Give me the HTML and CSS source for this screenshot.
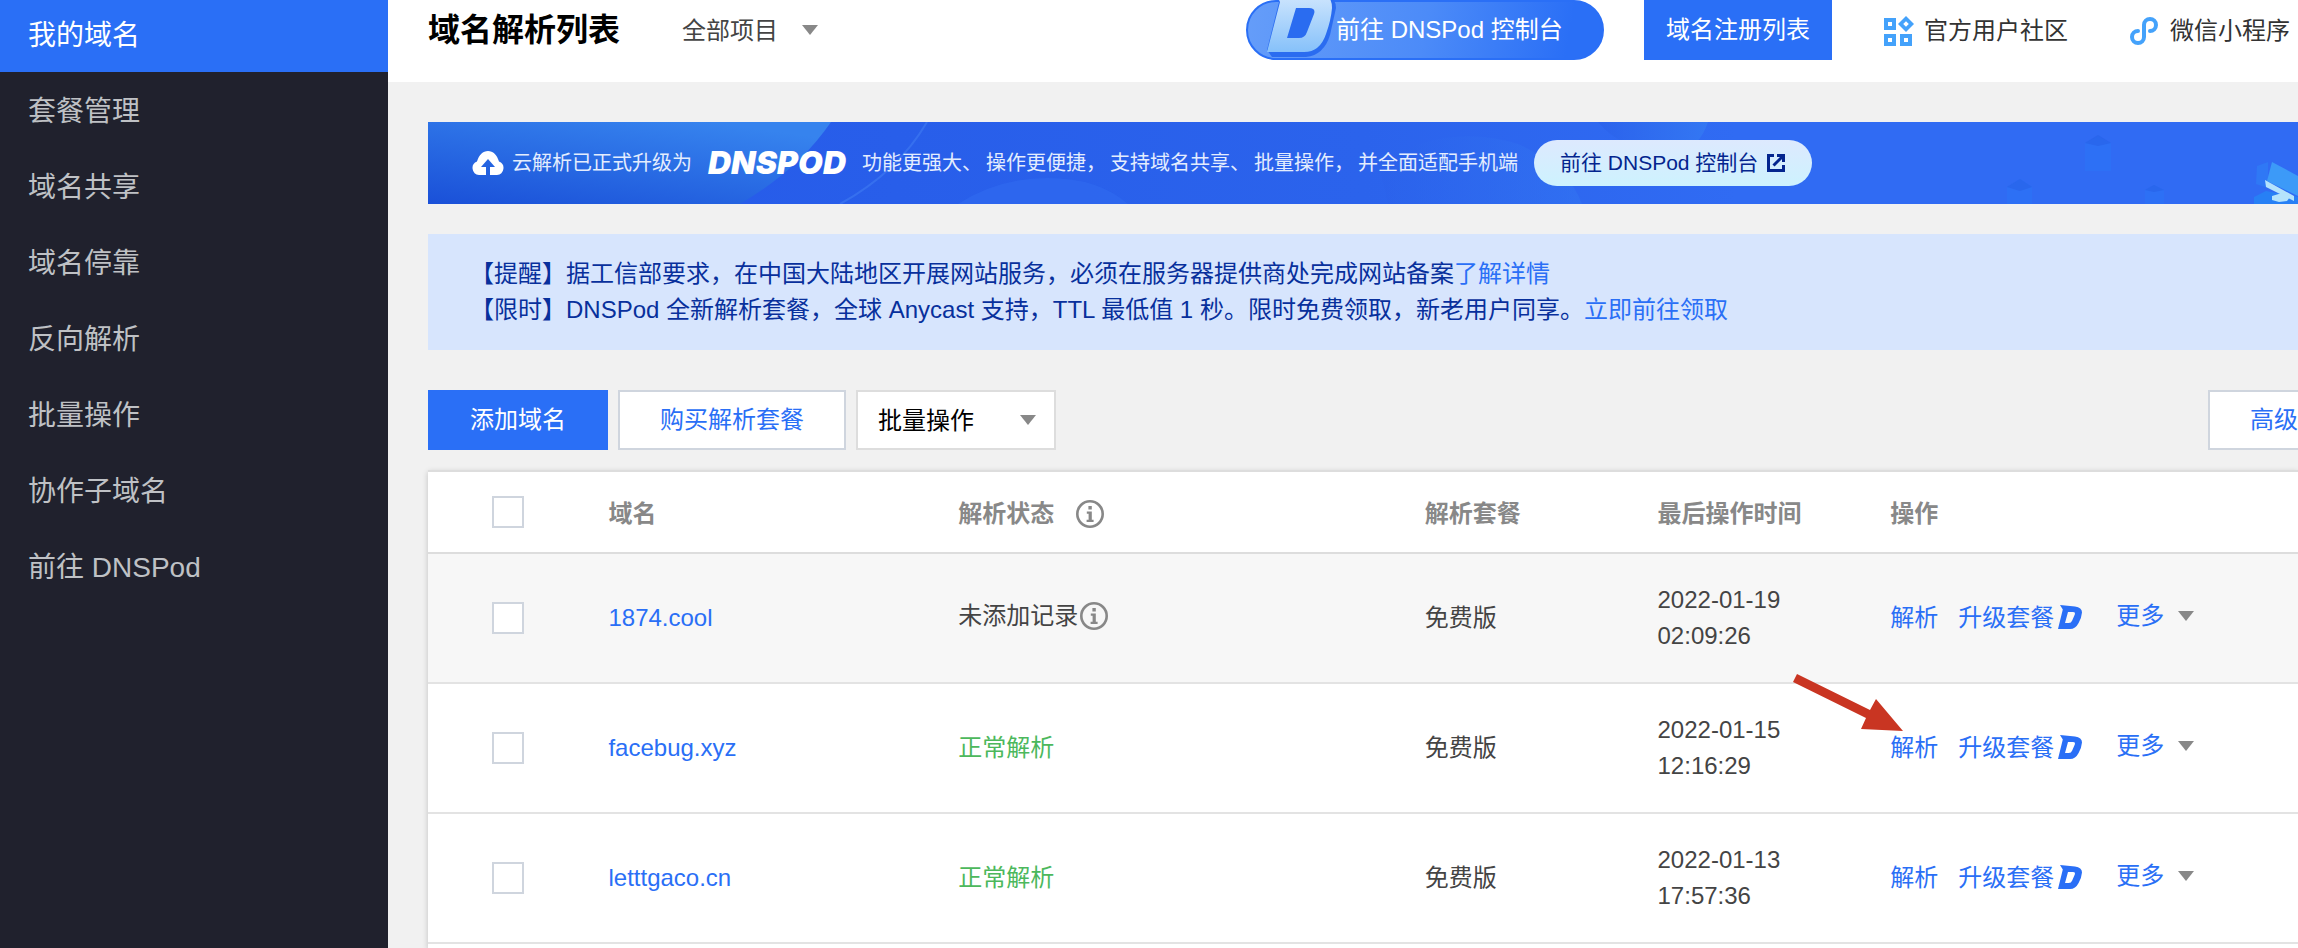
FILE: index.html
```
<!DOCTYPE html>
<html lang="zh-CN">
<head>
<meta charset="utf-8">
<title>域名解析列表</title>
<link rel="stylesheet" href="styles.css">
</head>
<body>
<svg class="defs" aria-hidden="true">
  <symbol id="caret" viewBox="0 0 16 10"><path d="M0 0h16L8 10z" fill="#888"/></symbol>
  <symbol id="info" viewBox="0 0 28 28">
    <circle cx="14" cy="14" r="12.7" fill="none" stroke="#888" stroke-width="2.6"/>
    <path d="M12.400 6h3.400v3.400h-3.400zM10.800 11.600h5v8.200h1.800v2.200h-7v-2.200h2v-6h-1.800z" fill="#888"/>
  </symbol>
  <symbol id="dmark" viewBox="0 0 24 24">
    <path fill="#2a6ff6" fill-rule="evenodd" d="M2 0l15 1.500q7 1 7 6-.6 6-3.400 10.500Q17.500 24 12 24H0L4.800 4.500zM10 7L7 18h3.800q2.400 0 3.400-2.600l2.600-6q.7-2.400-1.800-2.400z"/>
  </symbol>
</svg>
<div class="layout">
  <nav class="sidebar">
    <a class="nav-item active" href="#">我的域名</a>
    <a class="nav-item" href="#">套餐管理</a>
    <a class="nav-item" href="#">域名共享</a>
    <a class="nav-item" href="#">域名停靠</a>
    <a class="nav-item" href="#">反向解析</a>
    <a class="nav-item" href="#">批量操作</a>
    <a class="nav-item" href="#">协作子域名</a>
    <a class="nav-item" href="#">前往 DNSPod</a>
  </nav>
  <main class="main">
    <header class="header">
      <h1 class="title">域名解析列表</h1>
      <div class="picker project">
        <select class="picker-field" aria-label="项目"><option>全部项目</option></select>
        <svg class="picker-caret"><use href="#caret"/></svg>
      </div>
      <div class="header-right">
        <button class="console" type="button">
          <svg class="console-mark" viewBox="0 0 76 60" aria-hidden="true">
            <defs><linearGradient id="ice" x1="0" y1="0" x2="0" y2="1"><stop offset="0" stop-color="#cfe6fd"/><stop offset="1" stop-color="#86c1fa"/></linearGradient></defs>
            <path fill="#2a6cf0" d="M7 50l5 7h34q18-2 24-22l6-27q0-6-4-10H20z"/>
            <path fill="url(#ice)" fill-rule="evenodd" d="M16-6h44q12 0 12 14-1 12-6 26-6 18-22 18H7L20 2zM36 8L27 38h12q6 0 8-6l7-18q2-6-5-6z"/>
          </svg>
          <span>前往 DNSPod 控制台</span>
        </button>
        <button class="register" type="button">域名注册列表</button>
        <a class="link" href="#">
          <svg class="link-icon" viewBox="0 0 30 30" aria-hidden="true"><path fill="#44a2fb" fill-rule="evenodd" d="M0 2h12v12H0zm4 4v4h4V6zM0 18h12v12H0zm4 4v4h4v-4zM16 18h12v12H16zm4 4v4h4v-4zM22 0l8 8-8 8-8-8zm0 5.200L19.200 8l2.800 2.800L24.800 8z"/></svg>
          <span>官方用户社区</span>
        </a>
        <a class="link mini" href="#">
          <svg class="link-icon" viewBox="0 0 28 28" aria-hidden="true"><path fill="none" stroke="#44a2fb" stroke-width="4" stroke-linecap="round" d="M8 14a6 6 0 1 0 6 6V8a6 6 0 1 1 6 6"/></svg>
          <span>微信小程序</span>
        </a>
      </div>
    </header>

    <section class="banner">
      <svg class="banner-art" viewBox="0 0 1870 82" preserveAspectRatio="xMinYMin slice" aria-hidden="true">
        <defs>
          <linearGradient id="sky" x1="0" y1="1" x2=".7" y2="0"><stop offset="0" stop-color="#1a50d8"/><stop offset="1" stop-color="#3683ee"/></linearGradient>
          <linearGradient id="arc" x1="0" y1="0" x2="1" y2="0"><stop offset="0" stop-color="#2a60ea"/><stop offset="1" stop-color="#357cf3"/></linearGradient>
        </defs>
        <path fill="url(#sky)" d="M0 0h403Q370 48 312 82H0z"/>
        <path fill="none" stroke="#3f7cf2" stroke-width="2" opacity=".6" d="M499 0Q470 50 412 82"/>
        <path fill="#2f69ef" opacity=".7" d="M530 82q40-26 90-26t80 26z"/>
        <path fill="url(#arc)" opacity=".35" d="M950 40q70-40 140-18 50 22 64 60H960z"/>
        <path fill="url(#arc)" opacity=".7" d="M1170 0h110q-8 24-30 34-56-4-80-34z"/>
        <g fill="#2d70f5"><path d="M1657 21l13-7 13 7v28h-26zM1579 65l13-8 12 8v17h-25zM1717 68l9-5 10 5v14h-19z"/></g>
        <g fill="#255ee6" opacity=".5"><path d="M1657 21l13-8 13 8-13 3zM1579 65l13-8 12 8-12 4zM1717 68l9-5 10 5-10 2z"/></g>
        <path fill="#2780f5" d="M1826 75l12-6 32 6v7h-44z"/>
        <path fill="#2f78f5" d="M1829 44l11-4v26l-12-4z"/>
        <path fill="#3c9af8" d="M1844 40l26 14v20l-31-15z"/>
        <path fill="#b4e3fc" d="M1837 58l29 16v5l-28-14zM1844 74l10-3 8 4-3 4-8 1-7-2z"/>
      </svg>
      <div class="banner-body">
        <svg class="cloud" viewBox="0 0 32 24" aria-hidden="true"><path fill="#fff" d="M7 24a7 7 0 0 1-2-13.500C7 4 11 0 16 0s9 4 11 10.500A7 7 0 0 1 25 24h-7v-8h5l-7-8-7 8h5v8z"/></svg>
        <span>云解析已正式升级为</span>
        <strong class="wordmark">DNSPOD</strong>
        <span class="phrases"><span>功能更强大、</span><span>操作更便捷，</span><span>支持域名共享、</span><span>批量操作，</span><span>并全面适配手机端</span></span>
        <a class="pill" href="#">前往 DNSPod 控制台
          <svg class="pill-icon" viewBox="0 0 20 20" aria-hidden="true"><path fill="none" stroke="#04258e" stroke-width="3" d="M8 2.500H2.500v15h15V12M11 2.500h6.500V9M17 3l-9.500 9.500"/></svg>
        </a>
      </div>
    </section>

    <section class="notice">
      <p>【提醒】据工信部要求，在中国大陆地区开展网站服务，必须在服务器提供商处完成网站备案<a href="#">了解详情</a></p>
      <p>【限时】DNSPod 全新解析套餐，全球 Anycast 支持，TTL 最低值 1 秒。限时免费领取，新老用户同享。<a href="#">立即前往领取</a></p>
    </section>

    <div class="toolbar">
      <button class="btn primary" type="button">添加域名</button>
      <button class="btn" type="button">购买解析套餐</button>
      <div class="picker batch">
        <select class="picker-field" aria-label="批量操作"><option>批量操作</option></select>
        <svg class="picker-caret"><use href="#caret"/></svg>
      </div>
      <button class="btn advanced" type="button">高级</button>
    </div>

    <div class="card">
      <table class="domains">
        <colgroup><col class="c-check"><col class="c-name"><col class="c-status"><col class="c-plan"><col class="c-time"><col></colgroup>
        <thead>
          <tr>
            <th class="check"><input type="checkbox" aria-label="全选"></th>
            <th>域名</th>
            <th><span class="with-info spaced">解析状态<svg class="info"><use href="#info"/></svg></span></th>
            <th>解析套餐</th>
            <th>最后操作时间</th>
            <th>操作</th>
          </tr>
        </thead>
        <tbody>
          <tr class="hover">
            <td class="check"><input type="checkbox" aria-label="选择 1874.cool"></td>
            <td><a href="#">1874.cool</a></td>
            <td><span class="with-info raised">未添加记录<svg class="info"><use href="#info"/></svg></span></td>
            <td>免费版</td>
            <td>2022-01-19<br>02:09:26</td>
            <td><div class="actions"><a href="#">解析</a><a class="upgrade" href="#">升级套餐<svg class="dmark"><use href="#dmark"/></svg></a><button class="more" type="button">更多<svg class="caret"><use href="#caret"/></svg></button></div></td>
          </tr>
          <tr>
            <td class="check"><input type="checkbox" aria-label="选择 facebug.xyz"></td>
            <td><a href="#">facebug.xyz</a></td>
            <td class="ok">正常解析</td>
            <td>免费版</td>
            <td>2022-01-15<br>12:16:29</td>
            <td class="pointed"><div class="actions"><a href="#">解析</a><a class="upgrade" href="#">升级套餐<svg class="dmark"><use href="#dmark"/></svg></a><button class="more" type="button">更多<svg class="caret"><use href="#caret"/></svg></button></div>
              <svg class="arrow" viewBox="0 0 110 58" aria-hidden="true"><path fill="#c93522" d="M4 0L77 36l6-11 27 32-42-2 5-11L0 8z"/></svg></td>
          </tr>
          <tr>
            <td class="check"><input type="checkbox" aria-label="选择 letttgaco.cn"></td>
            <td><a href="#">letttgaco.cn</a></td>
            <td class="ok">正常解析</td>
            <td>免费版</td>
            <td>2022-01-13<br>17:57:36</td>
            <td><div class="actions"><a href="#">解析</a><a class="upgrade" href="#">升级套餐<svg class="dmark"><use href="#dmark"/></svg></a><button class="more" type="button">更多<svg class="caret"><use href="#caret"/></svg></button></div></td>
          </tr>
        </tbody>
      </table>
    </div>
  </main>
</div>
</body>
</html>
```
FILE: styles.css
```
* { box-sizing: border-box; }
body {
  margin: 0;
  font-family: "Liberation Sans", "Noto Sans CJK SC", sans-serif;
  font-size: 24px;
  line-height: 36px;
  color: #444;
  background: #f1f1f1;
}
a { color: #2a6ff6; text-decoration: none; }
button, select { font: inherit; margin: 0; cursor: pointer; }
svg { flex: none; }
.defs { position: absolute; width: 0; height: 0; }

.layout { display: flex; min-height: 100vh; }
.sidebar { flex: none; width: 388px; background: #20212d; }
.nav-item {
  display: block;
  padding: 4px 28px 0;
  font-size: 28px;
  line-height: 72px;
  color: #bfc1c5;
}
.nav-item.active { padding-top: 0; background: #2a6ff6; color: #fff; }

.main { flex: 1; min-width: 0; display: flex; flex-direction: column; }
.header {
  display: flex;
  align-items: center;
  padding: 0 8px 22px 40px;
  background: #fff;
  white-space: nowrap;
}
.title { margin: 0; font-size: 32px; line-height: 60px; color: #000; }

.picker { position: relative; }
.picker-field {
  display: block;
  width: 100%;
  appearance: none;
  border: 0;
  background: transparent;
  color: inherit;
}
.picker-caret { position: absolute; top: 50%; width: 16px; height: 10px; margin-top: -5px; pointer-events: none; }
.project { margin-left: 62px; width: 138px; }
.project .picker-field { padding: 2px 0 0; }
.project .picker-caret { right: 2px; }

.header-right { display: flex; align-items: center; margin-left: auto; }
.console {
  display: flex;
  align-items: center;
  width: 358px;
  height: 60px;
  padding: 0 0 0 12px;
  border: 2px solid #2a6ff6;
  border-radius: 30px;
  background: linear-gradient(100deg, #659df9, #4c8bf8 50%, #2a6ff6 90%);
  color: #fff;
}
.console-mark { width: 76px; height: 60px; }
.register { height: 60px; margin-left: 40px; padding: 0 22px; border: 0; background: #2a6ff6; color: #fff; }
.link { display: flex; align-items: center; gap: 10px; margin-left: 52px; padding-top: 2px; color: #333; }
.link-icon { width: 30px; height: 30px; }
.mini { gap: 12px; margin-left: 62px; }
.mini .link-icon { width: 28px; height: 28px; }

.banner { position: relative; margin: 40px 0 0 40px; background: linear-gradient(90deg, #2559e8, #2b63ec 50%, #306bf3 70%); overflow: hidden; }
.banner-art { position: absolute; inset: 0; width: 100%; height: 100%; }
.banner-body {
  position: relative;
  display: flex;
  align-items: center;
  height: 82px;
  padding-left: 44px;
  font-size: 20px;
  color: #e4edfe;
  white-space: nowrap;
}
.cloud { width: 32px; height: 24px; margin-right: 8px; }
.wordmark { margin: 0 16px; font: italic 900 32px/36px Inter, sans-serif; color: #fff; }
.phrases { display: flex; gap: 4px; }
.pill {
  display: flex;
  align-items: center;
  gap: 8px;
  height: 46px;
  margin-left: 16px;
  padding: 0 26px;
  border-radius: 23px;
  background: linear-gradient(#dde9fe, #cdf2fe);
  font-size: 21px;
  color: #04258e;
}
.pill-icon { width: 20px; height: 20px; }

.notice { margin: 30px 0 0 40px; padding: 22px 42px; background: #d7e5fd; color: #08309c; }
.notice p { margin: 0; }

.toolbar { display: flex; gap: 10px; margin: 40px 0 20px 40px; }
.btn { height: 60px; padding: 0 40px; border: 2px solid #cfd5de; background: #fff; color: #2a6ff6; }
.primary { border-color: #2a6ff6; background: #2a6ff6; color: #fff; }
.advanced { margin-left: auto; padding-right: 0; border-right: 0; }
.batch { width: 200px; }
.batch .picker-field { height: 60px; padding: 2px 20px 0; border: 2px solid #ddd; background: #fff; color: #000; }
.batch .picker-caret { right: 20px; }

.card { flex: 1; margin-left: 40px; border-top: 2px solid #ddd; background: #fff; box-shadow: 0 2px 6px rgba(0, 0, 0, 0.2); }
.domains { width: 100%; table-layout: fixed; border-collapse: collapse; text-align: left; }
.c-check { width: 9.65%; }
.c-name { width: 18.7%; }
.c-status { width: 24.95%; }
.c-plan, .c-time { width: 12.45%; }
th { padding: 24px 0 20px; border-bottom: 2px solid #ddd; color: #888; }
td { padding: 28px 0; border-bottom: 2px solid #e3e3e3; }
.hover { background: #f7f7f7; }
.check { padding-left: 64px; }
th.check { padding-top: 20px; }
.check input {
  display: block;
  width: 32px;
  height: 32px;
  margin: 0;
  appearance: none;
  border: 2px solid #cfd5de;
  background: #fff;
}
.with-info { display: flex; align-items: center; }
.spaced { gap: 22px; }
.raised { gap: 2px; padding-bottom: 4px; }
.info { width: 28px; height: 28px; }
.ok { color: #4cb85c; }
.actions { display: flex; align-items: center; gap: 20px; white-space: nowrap; }
.upgrade { display: flex; align-items: center; gap: 4px; }
.dmark { width: 24px; height: 24px; margin-bottom: 2px; }
.more {
  display: flex;
  align-items: center;
  gap: 14px;
  margin-left: 14px;
  padding: 0 0 4px;
  border: 0;
  background: none;
  color: #2a6ff6;
}
.caret { width: 16px; height: 10px; }
.pointed { position: relative; }
.arrow { position: absolute; left: -97px; top: -10px; width: 110px; height: 58px; }
```
